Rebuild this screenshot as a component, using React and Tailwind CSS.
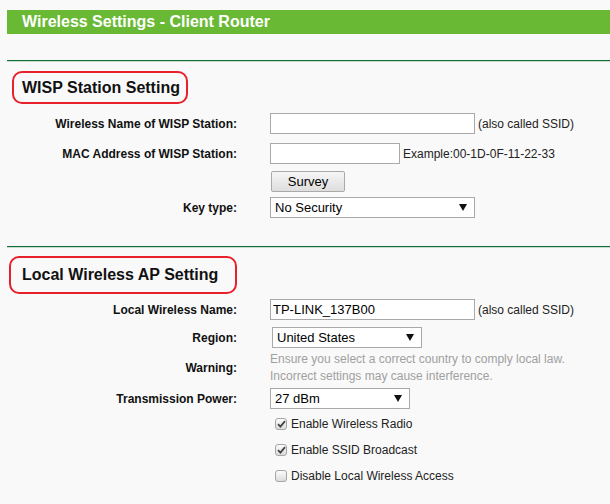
import React from 'react';

function Row({ label, children, className = '' }) {
  return (
    <div className={`flex items-center ${className}`}>
      <div className="w-[230px] shrink-0 text-right text-[12px] font-bold text-[#111]">{label}</div>
      <div className="ml-[33px] flex items-center">{children}</div>
    </div>
  );
}

function TextBox({ width, value = '' }) {
  return (
    <input
      readOnly
      value={value}
      className={`${width} h-[21px] border border-[#a9a9a9] bg-white px-[2px] text-[13px] text-black outline-none`}
    />
  );
}

function SelectBox({ width, value }) {
  return (
    <div className={`${width} flex h-[21px] items-center justify-between border border-[#a9a9a9] bg-white pl-[4px] pr-[7px] text-[13px] text-black`}>
      <span>{value}</span>
      <svg width="8" height="7" viewBox="0 0 8 7">
        <path d="M0 0h8L4 7z" fill="#111" />
      </svg>
    </div>
  );
}

function Check({ checked, label, className = '' }) {
  return (
    <div className={`ml-[268px] flex h-[13px] items-center ${className}`}>
      <span className="flex h-[12px] w-[12px] items-center justify-center rounded-[3px] border border-[#a6a6a6] bg-gradient-to-b from-[#fcfcfc] to-[#dcdcdc]">
        {checked && (
          <svg width="9" height="8" viewBox="0 0 9 8">
            <path d="M1 4.2L3.4 6.6L8 1.2" fill="none" stroke="#444" strokeWidth="1.8" />
          </svg>
        )}
      </span>
      <span className="ml-[4px] text-[12px] text-[#222]">{label}</span>
    </div>
  );
}

function Divider({ className = '' }) {
  return (
    <div className={className}>
      <div className="h-[1px] bg-[#0f6e35]" />
      <div className="h-[1px] bg-[#c9ddd0]" />
    </div>
  );
}

export default function App() {
  return (
    <div className="min-h-[504px] bg-[#f9f9f9] pl-[7px] pt-[10px] font-['Liberation_Sans',Arial,sans-serif]">
      <div className="h-[24px] bg-[#69b934] pl-[15px] text-[16px] font-bold leading-[24px] text-white">
        Wireless Settings - Client Router
      </div>

      <Divider className="mt-[26px]" />

      {/* WISP Station */}
      <div className="ml-[5px] mt-[9px] flex h-[33px] w-[176px] items-center rounded-[10px] border-2 border-[#e8202a] pl-[8px] text-[16px] font-bold text-[#111]">
        WISP Station Setting
      </div>

      <Row label="Wireless Name of WISP Station:" className="mt-[9px]">
        <TextBox width="w-[205px]" />
        <span className="ml-[3px] text-[12px] text-[#222]">(also called SSID)</span>
      </Row>
      <Row label="MAC Address of WISP Station:" className="mt-[9px]">
        <TextBox width="w-[130px]" />
        <span className="ml-[3px] text-[12px] text-[#222]">Example:00-1D-0F-11-22-33</span>
      </Row>
      <Row label="" className="mt-[7px]">
        <button className="ml-[1px] h-[21px] w-[74px] rounded-[2px] border border-[#a9a9a9] bg-gradient-to-b from-[#f6f6f6] to-[#dedede] text-[13px] text-black">
          Survey
        </button>
      </Row>
      <Row label="Key type:" className="mt-[5px]">
        <SelectBox width="w-[205px]" value="No Security" />
      </Row>

      <Divider className="mt-[28px]" />

      {/* Local AP */}
      <div className="ml-[2px] mt-[8px] flex h-[38px] w-[228px] items-center rounded-[10px] border-2 border-[#e8202a] pl-[11px] text-[16px] font-bold text-[#111]">
        Local Wireless AP Setting
      </div>

      <Row label="Local Wireless Name:" className="mt-[5px]">
        <TextBox width="w-[205px]" value="TP-LINK_137B00" />
        <span className="ml-[3px] text-[12px] text-[#222]">(also called SSID)</span>
      </Row>
      <Row label="Region:" className="mt-[7px]">
        <div className="ml-[2px]">
          <SelectBox width="w-[150px]" value="United States" />
        </div>
      </Row>
      <Row label="Warning:" className="mt-[3px]">
        <div className="text-[12px] leading-[17px] text-[#a0a0a0]">
          <div>Ensure you select a correct country to comply local law.</div>
          <div>Incorrect settings may cause interference.</div>
        </div>
      </Row>
      <Row label="Transmission Power:" className="mt-[3px]">
        <SelectBox width="w-[140px]" value="27 dBm" />
      </Row>

      <Check checked label="Enable Wireless Radio" className="mt-[8px]" />
      <Check checked label="Enable SSID Broadcast" className="mt-[13px]" />
      <Check label="Disable Local Wireless Access" className="mt-[13px]" />
    </div>
  );
}
